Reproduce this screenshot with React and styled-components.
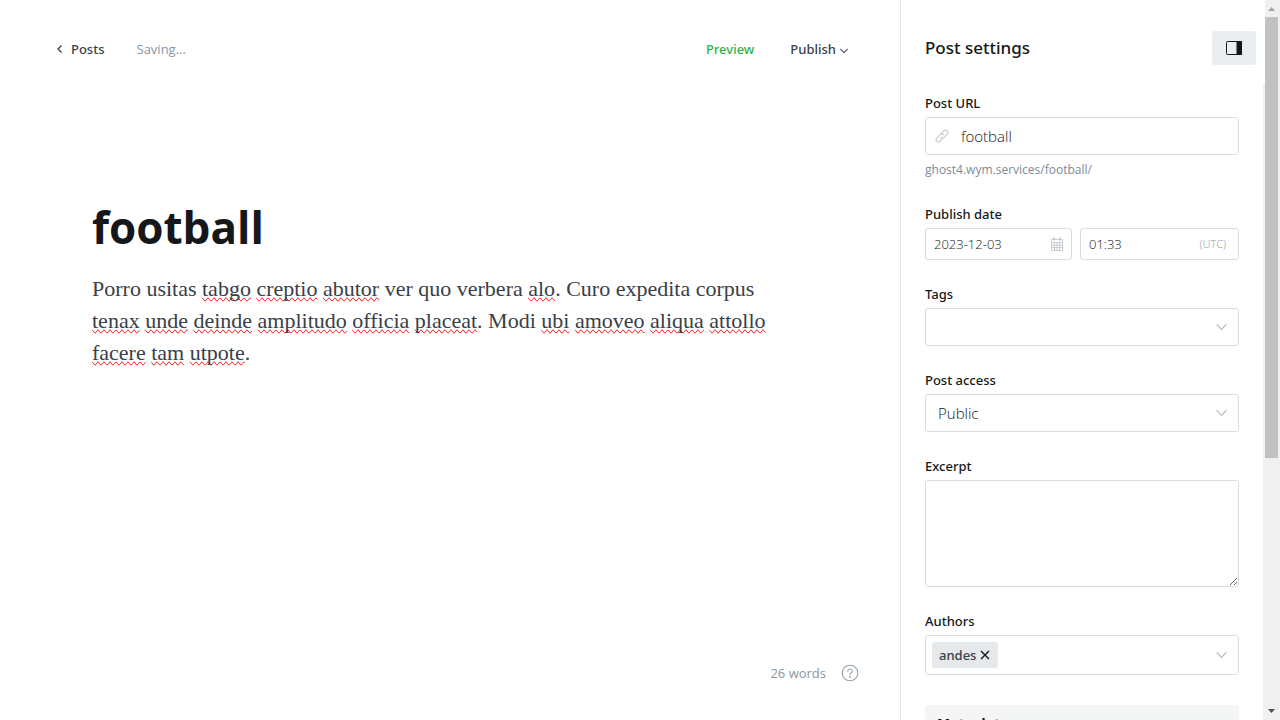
import React from "react";
import styled, { createGlobalStyle } from "styled-components";

const GlobalStyle = createGlobalStyle`
  *, *::before, *::after { box-sizing: border-box; }
  body {
    margin: 0;
    background: #fff;
    color: #15171a;
    font: 400 13px/20px "Open Sans", "Noto Sans", sans-serif;
  }
  button, input, select, textarea { font: inherit; color: inherit; margin: 0; }
`;

const mediumFont = `
  font-family: "Noto Sans", "Open Sans", sans-serif;
  font-weight: 500;
`;

const Shell = styled.div`
  display: grid;
  grid-template-columns: minmax(0, 1fr) 363px 17px;
  height: 100vh;
  overflow: hidden;
`;

const Editor = styled.main`
  display: flex;
  flex-direction: column;
  min-width: 0;
`;

const TopBar = styled.header`
  display: flex;
  align-items: center;
  justify-content: space-between;
  padding: 32px 52px 32px 56px;
`;

const BarGroup = styled.div`
  display: flex;
  align-items: center;
  gap: ${(p) => p.$gap}px;
`;

const BackLink = styled.a`
  display: flex;
  align-items: center;
  gap: 8px;
  height: 34px;
  color: #394047;
  ${mediumFont}
  text-decoration: none;
`;

const Status = styled.span`
  color: #8796a5;
`;

const TextButton = styled.button`
  display: flex;
  align-items: center;
  gap: 4px;
  padding: 0;
  border: 0;
  background: none;
  ${mediumFont}
  color: ${(p) => (p.$green ? "#30b24a" : "#394047")};
`;

const ButtonIcon = styled.span`
  display: flex;
  padding-top: 3px;
`;

const Canvas = styled.section`
  display: flex;
  flex-direction: column;
  flex: 1;
  gap: 17px;
  padding: 100px 108px 0 92px;
`;

const TitleInput = styled.input`
  width: 100%;
  height: 58px;
  padding: 0;
  border: 0;
  outline: 0;
  background: none;
  color: #15171a;
  font-size: 44px;
  font-weight: 700;
  line-height: 58px;
`;

const Body = styled.div`
  outline: 0;
  color: #394047;
  font: 400 22px/32px Georgia, "Liberation Serif", serif;
`;

const Misspelt = styled.span`
  text-decoration: underline wavy #f00 1px;
  text-decoration-line: spelling-error;
`;

const Footer = styled.footer`
  display: flex;
  align-items: center;
  justify-content: flex-end;
  gap: 15px;
  padding: 0 41px 37px;
  color: #8796a5;
`;

const IconButton = styled.button`
  display: flex;
  padding: 0;
  border: 0;
  background: none;
`;

const Panel = styled.aside`
  min-width: 0;
  overflow: hidden;
  border-left: 1px solid #e5e9ed;
  padding: 31px 7px 0 24px;
`;

const PanelHeader = styled.div`
  display: flex;
  align-items: center;
  justify-content: space-between;
  margin-bottom: 28px;
`;

const PanelTitle = styled.h2`
  margin: 0;
  font-size: 17px;
  ${mediumFont}
  line-height: 24px;
`;

const PanelToggle = styled.button`
  display: flex;
  align-items: center;
  justify-content: center;
  width: 44px;
  height: 34px;
  padding: 0;
  border: 0;
  border-radius: 3px;
  background: #ebeef0;
`;

const Form = styled.form`
  display: flex;
  flex-direction: column;
  gap: 24px;
  padding-right: 17px;
`;

const Field = styled.div`
  display: flex;
  flex-direction: column;
  gap: 4px;
`;

const Label = styled.label`
  ${mediumFont}
  color: #15171a;
`;

const Hint = styled.p`
  margin: 0;
  padding-top: 1px;
  font-size: 12px;
  color: #7c8b9a;
`;

const Box = styled.div`
  display: flex;
  align-items: center;
  gap: ${(p) => p.$gap || 8}px;
  min-width: 0;
  height: ${(p) => p.$height || 38}px;
  padding: ${(p) => p.$padding || "0 11px 0 12px"};
  border: 1px solid #dadddf;
  border-radius: 3px;
  background: #fff;
`;

const Row = styled.div`
  display: grid;
  grid-template-columns: 147fr 159fr;
  gap: 8px;
`;

const BareInput = styled.input`
  flex: 1;
  min-width: 0;
  padding: 0;
  border: 0;
  outline: 0;
  background: none;
  color: #15171a;
  font-size: ${(p) => (p.$small ? 13 : 15)}px;
  font-weight: 300;
`;

const BareSelect = styled.select`
  flex: 1;
  min-width: 0;
  padding: 0;
  border: 0;
  outline: 0;
  appearance: none;
  background: none;
  color: #15171a;
  font-size: 15px;
  font-weight: 300;
`;

const Zone = styled.span`
  color: #8796a5;
  font-size: 11px;
  font-weight: 300;
`;

const Excerpt = styled.textarea`
  height: 107px;
  padding: 8px 12px;
  border: 1px solid #dadddf;
  border-radius: 3px;
  outline: 0;
  resize: vertical;
`;

const Token = styled.span`
  display: flex;
  align-items: center;
  gap: 4px;
  height: 26px;
  padding: 0 8px 0 7px;
  border-radius: 3px;
  background: #e5e9ec;
  color: #394047;
  ${mediumFont}
`;

const MetaButton = styled.button`
  margin-top: 6px;
  padding: 9px 12px;
  border: 0;
  border-radius: 3px;
  background: #f4f6f6;
  text-align: left;
  font-size: 14px;
  font-weight: 700;
`;

const Scrollbar = styled.div`
  display: flex;
  flex-direction: column;
  align-items: center;
  justify-content: space-between;
  background: linear-gradient(#fff, #fff) 0 0 / 2px 84px no-repeat #f0f0f0;
`;

const ScrollThumb = styled.div`
  flex: 0 1 441px;
  width: 13px;
  margin-bottom: auto;
  background: #c1c1c1;
`;

const ScrollArrow = styled.svg`
  flex: none;
  width: 17px;
  height: 17px;
`;

const Chevron = ({ size = 11, color = "#b3bcc5", stroke = 1.2 }) => (
  <svg width={size} height="8" viewBox="0 0 11 8" fill="none" stroke={color} strokeWidth={stroke} aria-hidden="true">
    <path d="M.6 1.2 5.5 6.3 10.4 1.2" />
  </svg>
);

const LinkIcon = () => (
  <svg width="14" height="14" viewBox="0 0 24 24" fill="none" stroke="#c8cdd2" strokeWidth="2" strokeLinecap="round" strokeLinejoin="round" aria-hidden="true">
    <path d="M11 8 15.200 3a4 4 0 0 1 5.800 5.800l-5.500 5.500a4 4 0 0 1-5.800 0" />
    <path d="M13 16 8.800 21A4 4 0 0 1 3 15.200l5.500-5.500a4 4 0 0 1 5.800 0" />
  </svg>
);

const CalendarIcon = () => (
  <svg width="12" height="14" viewBox="0 0 12 14" fill="none" stroke="#c3cad1" aria-hidden="true">
    <path d="M.5 2.500h11v11H.5zM.5 5.500h11M3.500 5v8.500M6 5v8.500M8.500 5v8.500M.5 8h11M.5 10.500h11" strokeWidth=".9" />
    <path d="M3 .5v3M9 .5v3" strokeWidth="1.800" />
  </svg>
);

const text = [
  ["Porro usitas "], ["tabgo", 1], [" "], ["creptio", 1], [" "], ["abutor", 1],
  [" ver quo verbera "], ["alo", 1], [". Curo expedita corpus "],
  ["tenax", 1], [" "], ["unde", 1], [" "], ["deinde", 1], [" "], ["amplitudo", 1], [" "],
  ["officia", 1], [" "], ["placeat", 1], [". Modi "], ["ubi", 1], [" "], ["amoveo", 1], [" "],
  ["aliqua", 1], [" "], ["attollo", 1], [" "], ["facere", 1], [" "], ["tam", 1], [" "], ["utpote", 1], ["."],
];

export default function App() {
  return (
    <>
      <GlobalStyle />
      <Shell>
        <Editor>
          <TopBar>
            <BarGroup $gap={32}>
              <BackLink href="#posts">
                <svg width="7" height="10" viewBox="0 0 7 10" fill="none" stroke="#394047" strokeWidth="1.3" aria-hidden="true">
                  <path d="M5.500 1.500 2 5l3.500 3.500" />
                </svg>
                Posts
              </BackLink>
              <Status>Saving...</Status>
            </BarGroup>
            <BarGroup $gap={36}>
              <TextButton type="button" $green>Preview</TextButton>
              <TextButton type="button">
                Publish
                <ButtonIcon>
                  <Chevron size={8} color="#5d6670" stroke={1.8} />
                </ButtonIcon>
              </TextButton>
            </BarGroup>
          </TopBar>
          <Canvas>
            <TitleInput aria-label="Post title" defaultValue="football" spellCheck={false} />
            <Body contentEditable suppressContentEditableWarning spellCheck={false} role="textbox" aria-label="Post body">
              {text.map(([word, wrong], i) =>
                wrong ? <Misspelt key={i}>{word}</Misspelt> : <React.Fragment key={i}>{word}</React.Fragment>
              )}
            </Body>
          </Canvas>
          <Footer>
            <span>26 words</span>
            <IconButton type="button" aria-label="Help">
              <svg width="18" height="18" viewBox="0 0 18 18" fill="none" stroke="#95a1ad" strokeWidth="1.1" strokeLinecap="round">
                <circle cx="9" cy="9" r="7.800" />
                <path d="M6.800 7.200a2.200 2.200 0 1 1 3.300 1.900c-.8.450-1.100.8-1.100 1.600" />
                <circle cx="9" cy="12.900" r=".4" fill="#95a1ad" />
              </svg>
            </IconButton>
          </Footer>
        </Editor>

        <Panel>
          <PanelHeader>
            <PanelTitle>Post settings</PanelTitle>
            <PanelToggle type="button" aria-label="Toggle settings">
              <svg width="16" height="14" viewBox="0 0 16 14" aria-hidden="true">
                <rect x=".5" y=".5" width="15" height="13" rx="1" fill="none" stroke="#15171a" />
                <path d="M10.500 0H15a1 1 0 0 1 1 1v12a1 1 0 0 1-1 1h-4.500z" fill="#15171a" />
              </svg>
            </PanelToggle>
          </PanelHeader>
          <Form>
            <Field>
              <Label htmlFor="url">Post URL</Label>
              <Box $gap={12} $padding="0 9px">
                <LinkIcon />
                <BareInput id="url" defaultValue="football" />
              </Box>
              <Hint>ghost4.wym.services/football/</Hint>
            </Field>
            <Field>
              <Label htmlFor="date">Publish date</Label>
              <Row>
                <Box $height={32} $padding="0 8px">
                  <BareInput id="date" $small defaultValue="2023-12-03" />
                  <CalendarIcon />
                </Box>
                <Box $height={32} $padding="0 12px 0 8px">
                  <BareInput aria-label="Publish time" $small defaultValue="01:33" />
                  <Zone>(UTC)</Zone>
                </Box>
              </Row>
            </Field>
            <Field>
              <Label htmlFor="tags">Tags</Label>
              <Box>
                <BareInput id="tags" />
                <Chevron />
              </Box>
            </Field>
            <Field>
              <Label htmlFor="access">Post access</Label>
              <Box>
                <BareSelect id="access">
                  <option>Public</option>
                </BareSelect>
                <Chevron />
              </Box>
            </Field>
            <Field>
              <Label htmlFor="excerpt">Excerpt</Label>
              <Excerpt id="excerpt" />
            </Field>
            <Field>
              <Label htmlFor="authors">Authors</Label>
              <Box $height={40} $padding="0 11px 0 6px">
                <Token>
                  andes
                  <IconButton type="button" aria-label="Remove andes">
                    <svg width="10" height="10" viewBox="0 0 10 10" stroke="#15171a" strokeWidth="1.400">
                      <path d="m1 1 8 8M9 1 1 9" />
                    </svg>
                  </IconButton>
                </Token>
                <BareInput id="authors" />
                <Chevron />
              </Box>
            </Field>
            <MetaButton type="button">Meta data</MetaButton>
          </Form>
        </Panel>

        <Scrollbar aria-hidden="true">
          <ScrollArrow viewBox="0 0 17 17"><path d="M5 11h7L8.500 7z" fill="#a3a3a3" /></ScrollArrow>
          <ScrollThumb />
          <ScrollArrow viewBox="0 0 17 17"><path d="M5 6h7L8.500 10z" fill="#505050" /></ScrollArrow>
        </Scrollbar>
      </Shell>
    </>
  );
}
